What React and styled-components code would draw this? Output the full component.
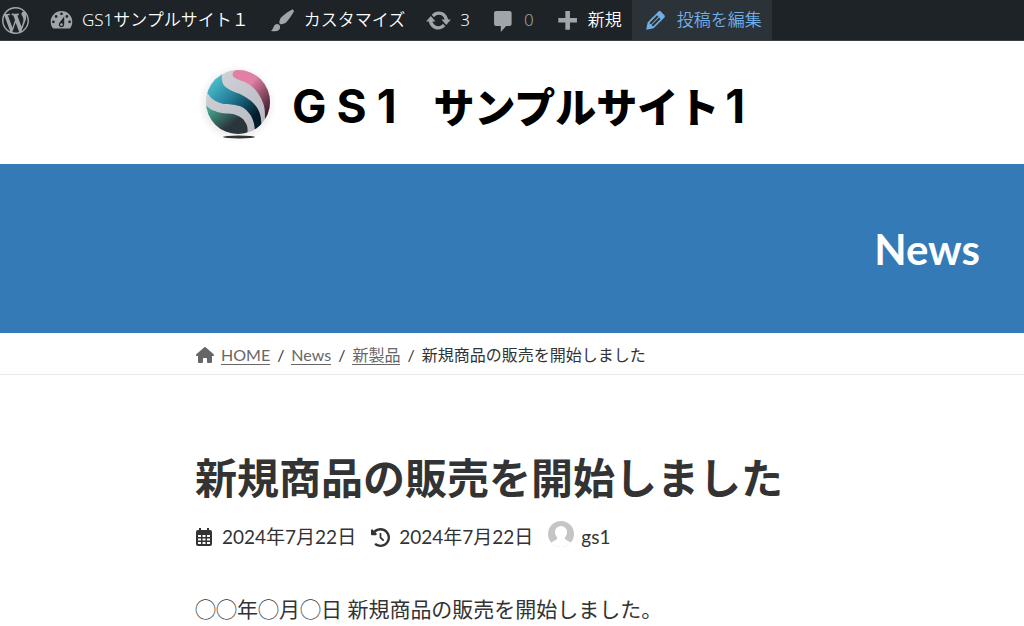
import React from "react";
import styled, { createGlobalStyle } from "styled-components";
import { FaHouse, FaClockRotateLeft } from "react-icons/fa6";

const GlobalStyle = createGlobalStyle`
  *, *::before, *::after { box-sizing: border-box; }
  body {
    margin: 0;
    background: #fff;
    color: #333;
    font-family: Lato, "Noto Sans CJK JP", sans-serif;
    font-size: 21px;
    line-height: 32px;
  }
  a { color: inherit; }
`;

const AdminBar = styled.nav`
  display: flex;
  height: 41px;
  background: #1d2327;
  border-bottom: 1px solid #3a3f43;
  color: #fff;
  font-family: "Noto Sans", "Noto Sans CJK JP", sans-serif;
  font-size: 17px;
  font-weight: 350;
  line-height: 40px;
  white-space: nowrap;
  overflow: hidden;
`;

const AdminItem = styled.a`
  display: flex;
  align-items: center;
  gap: ${(p) => p.$gap || 8}px;
  padding: 0 ${(p) => p.$end || 10}px 0 ${(p) => p.$start || 10}px;
  text-decoration: none;
  color: ${(p) => (p.$active ? "#72aee6" : p.$muted ? "#9ca1a6" : "inherit")};
  background: ${(p) => (p.$active ? "#2c3338" : "transparent")};
  svg {
    flex: none;
    fill: ${(p) => (p.$active ? "#72aee6" : "#a0a5aa")};
  }
`;

const DashIcon = ({ d, size = 27 }) => (
  <svg width={size} height={size} viewBox="0 0 20 20" aria-hidden="true">
    <path d={d} />
  </svg>
);

const icons = {
  wordpress:
    "M20 10c0-5.51-4.49-10-10-10C4.48 0 0 4.49 0 10c0 5.52 4.48 10 10 10 5.51 0 10-4.48 10-10zM7.78 15.37L4.37 6.22c.55-.02 1.17-.08 1.17-.08.5-.06.44-1.13-.06-1.11 0 0-1.45.11-2.37.11-.18 0-.37 0-.58-.01C4.12 2.69 6.87 1.11 10 1.11c2.33 0 4.45.87 6.05 2.34-.68-.11-1.65.39-1.65 1.58 0 .74.45 1.36.9 2.1.35.61.55 1.36.55 2.46 0 1.49-1.4 5-1.4 5l-3.03-8.37c.54-.02.82-.17.82-.17.5-.05.44-1.25-.06-1.22 0 0-1.44.12-2.38.12-.87 0-2.33-.12-2.33-.12-.5-.03-.56 1.2-.06 1.22l.92.08 1.26 3.41zM17.41 10c.24-.64.74-1.87.43-4.25.7 1.29 1.05 2.71 1.05 4.25 0 3.29-1.73 6.24-4.4 7.78.97-2.59 1.94-5.2 2.92-7.78zM6.1 18.09C3.12 16.65 1.11 13.53 1.11 10c0-1.3.23-2.48.72-3.59C3.25 10.3 4.67 14.2 6.1 18.09zm4.03-6.63l2.58 6.98c-.86.29-1.76.45-2.71.45-.79 0-1.57-.11-2.29-.33.81-2.38 1.62-4.74 2.42-7.1z",
  dashboard:
    "M3.76 16h12.48c1.1-1.37 1.76-3.11 1.76-5 0-4.42-3.58-8-8-8s-8 3.58-8 8c0 1.89.66 3.63 1.76 5zM10 4c.55 0 1 .45 1 1s-.45 1-1 1-1-.45-1-1 .45-1 1-1zM6 6c.55 0 1 .45 1 1s-.45 1-1 1-1-.45-1-1 .45-1 1-1zm8 0c.55 0 1 .45 1 1s-.45 1-1 1-1-.45-1-1 .45-1 1-1zm-5.37 5.55L12 7v6c0 1.1-.9 2-2 2s-2-.9-2-2c0-.57.24-1.08.63-1.45zM4 10c.55 0 1 .45 1 1s-.45 1-1 1-1-.45-1-1 .45-1 1-1zm12 0c.55 0 1 .45 1 1s-.45 1-1 1-1-.45-1-1 .45-1 1-1zm-5 3c0-.55-.45-1-1-1s-1 .45-1 1 .45 1 1 1 1-.45 1-1z",
  brush:
    "M18.33 3.57s.27-.8-.31-1.36c-.53-.52-1.22-.24-1.22-.24-.61.3-5.76 3.47-7.67 5.57-.86.96-2.06 3.79-1.09 4.82.92.98 3.96-.17 4.79-1 2.06-2.06 5.21-7.17 5.5-7.79zM1.4 17.65c2.37-1.56 1.46-3.41 3.23-4.64.93-.65 2.22-.62 3.08.29.63.67.8 2.57-.16 3.46-1.57 1.45-4 1.55-6.15.89z",
  update:
    "M10.2 3.28c3.53 0 6.43 2.61 6.92 6h2.08l-3.5 4-3.5-4h2.32c-.45-1.97-2.21-3.45-4.32-3.45-1.45 0-2.73.71-3.54 1.78L4.95 5.66C6.23 4.2 8.11 3.28 10.2 3.28zm-.4 13.44c-3.52 0-6.43-2.61-6.92-6H.8l3.5-4c1.17 1.33 2.33 2.67 3.5 4H5.48c.45 1.97 2.21 3.45 4.32 3.45 1.45 0 2.73-.71 3.54-1.78l1.71 1.95c-1.28 1.46-3.15 2.38-5.25 2.38z",
  comment:
    "M4.500 3h10c.800 0 1.500.700 1.500 1.500v8c0 .800-.700 1.500-1.500 1.500H12l-4 4.500V14H4.500c-.800 0-1.500-.700-1.500-1.500v-8C3 3.700 3.700 3 4.500 3z",
  plus: "M17 8.200v3.200h-5.200v5.400H8.400v-5.400H3.200V8.200h5.200V3h3.400v5.200z",
  pencil:
    "M13.89 3.39l2.71 2.72c.46.46.42 1.24.03 1.64l-8.01 8.02-5.56 1.16 1.16-5.58s7.6-7.63 7.99-8.03c.39-.39 1.22-.39 1.68.07zm-2.73 2.79l-5.59 5.61 1.11 1.11 5.54-5.65zm-2.97 8.23l5.58-5.6-1.07-1.08-5.59 5.6z",
};

const SiteHeader = styled.header`
  height: 123px;
  padding: 24px 44px 24px 196px;
`;

const Brand = styled.a`
  display: flex;
  align-items: center;
  width: max-content;
  height: 80px;
  color: #000;
  text-decoration: none;
  white-space: nowrap;
`;

const BrandName = styled.span`
  display: flex;
  align-items: baseline;
  margin-left: 12px;
  font-weight: 700;
  line-height: 64px;
`;

const BrandLatin = styled.span`
  display: flex;
  gap: 10px;
  font-family: Inter, sans-serif;
  font-size: 46px;
`;

const BrandKana = styled.span`
  margin: 0 6px 0 37px;
  font-family: "Noto Sans CJK JP", sans-serif;
  font-size: 41px;
  font-weight: 900;
`;

const Sphere = () => (
  <svg width="84" height="80" viewBox="0 0 84 80" aria-hidden="true">
    <defs>
      <clipPath id="ball"><circle cx="42" cy="37" r="32" /></clipPath>
      <radialGradient id="halo">
        <stop offset=".75" stopColor="#ececec" />
        <stop offset="1" stopColor="#fff" />
      </radialGradient>
      <linearGradient id="pink" x1="0" y1="0" x2="1" y2="1">
        <stop offset=".35" stopColor="#e27fa5" />
        <stop offset=".85" stopColor="#3b1a29" />
      </linearGradient>
      <linearGradient id="blue" x1="0" y1="0" x2="1" y2="1">
        <stop offset=".15" stopColor="#48bccb" />
        <stop offset=".45" stopColor="#237c96" />
        <stop offset=".8" stopColor="#021c2a" />
      </linearGradient>
      <linearGradient id="green" x1="0" y1="0" x2="1" y2="1">
        <stop offset=".15" stopColor="#46a68d" />
        <stop offset=".65" stopColor="#2b343b" />
      </linearGradient>
      <linearGradient id="silver" x1="0" y1="0" x2="1" y2="1">
        <stop offset="0" stopColor="#d5d5dc" />
        <stop offset="1" stopColor="#b4b4bc" />
      </linearGradient>
    </defs>
    <circle cx="41" cy="39" r="39" fill="url(#halo)" />
    <ellipse cx="43" cy="72" rx="16" ry="1.500" fill="#333" />
    <g clipPath="url(#ball)">
      <rect x="8" y="4" width="68" height="68" fill="url(#silver)" />
      <path d="M42 4C36 6 35 11 39 13C44 16 49 16 54 20C60 24 65 32 67 38C69 43 69 47 69 54L80 54L80 4Z" fill="url(#pink)" />
      <path d="M26 8C25 17 27 20 31 23C35 26 39 27 44 29C50 32 56 36 59 40C65 47 66 55 65 66L59 68C59 58 56 51 52 47C48 42 44 41 39 40C34 39 29 40 24 38C19 36 15 34 13 30L8 26L8 8Z" fill="url(#blue)" />
      <path d="M8 38C12 43 15 45 19 46C25 49 31 48 37 49C43 51 47 53 49 57C52 61 52 64 51 71L8 71Z" fill="url(#green)" />
    </g>
  </svg>
);

const Banner = styled.div`
  display: flex;
  align-items: center;
  justify-content: flex-end;
  height: 169px;
  padding: 0 44px;
  background: #337ab7;
  color: #fff;
  font-size: 42px;
  font-weight: 700;
`;

const Breadcrumb = styled.nav`
  height: 42px;
  padding: 0 44px 0 196px;
  border-bottom: 1px solid #e9e9e9;
  font-size: 16px;
  line-height: 24px;
  ol {
    display: flex;
    margin: 0;
    padding: 10px 0 0;
    list-style: none;
    white-space: nowrap;
  }
  li { display: flex; align-items: center; }
  li + li::before { content: "/"; margin: 0 7px; }
  svg { margin-right: 7px; color: #666; }
  a {
    line-height: 18px;
    color: #666;
    text-decoration: none;
    border-bottom: 1px solid #666;
  }
`;

const Article = styled.article`
  padding: 71px 44px 24px 195px;
  h1 {
    margin: 0;
    font-size: 42px;
    line-height: 64px;
    font-weight: 700;
  }
  p { margin: 40px 0 0; }
`;

const Meta = styled.div`
  display: flex;
  align-items: center;
  height: 32px;
  margin-top: 11px;
  gap: 15px;
  font-size: 19px;
  line-height: 28px;
  white-space: nowrap;
`;

const MetaItem = styled.span`
  display: flex;
  align-items: center;
  gap: ${(p) => p.$gap || 9}px;
`;

const CalendarIcon = () => (
  <svg width="18" height="20" viewBox="0 0 18 20" aria-hidden="true">
    <path
      fill="#333"
      fillRule="evenodd"
      d="M4 1h2v2h6V1h2v2h1a2 2 0 0 1 2 2v12a2 2 0 0 1-2 2H3a2 2 0 0 1-2-2V5a2 2 0 0 1 2-2h1zM3 8v2h3V8zM7.500 8v2h3V8zM12 8v2h3V8zM3 11.500v2h3v-2zM7.500 11.500v2h3v-2zM12 11.500v2h3v-2zM3 15v2h3v-2zM7.500 15v2h3v-2zM12 15v2h3v-2z"
    />
  </svg>
);

const Avatar = () => (
  <svg width="26" height="32" viewBox="0 0 26 32" aria-hidden="true">
    <defs><clipPath id="avatar"><circle cx="13" cy="13" r="13" /></clipPath></defs>
    <g clipPath="url(#avatar)">
      <rect width="26" height="26" fill="#c5c5c5" />
      <path d="M13 5a6 6 0 0 1 6 6c0 2-.7 4-2 5.200v2c2 1.200 4 2 6 3.500V27H3v-5.300c2-1.500 4-2.300 6-3.500v-2C7.700 15 7 13 7 11a6 6 0 0 1 6-6z" fill="#fff" />
    </g>
  </svg>
);

export default function App() {
  return (
    <>
      <GlobalStyle />
      <AdminBar>
        <AdminItem href="#" $start={2} $end={9} aria-label="WordPress"><DashIcon d={icons.wordpress} /></AdminItem>
        <AdminItem href="#" $gap={7}><DashIcon d={icons.dashboard} />GS1サンプルサイト１</AdminItem>
        <AdminItem href="#"><DashIcon d={icons.brush} />カスタマイズ</AdminItem>
        <AdminItem href="#"><DashIcon d={icons.update} />3</AdminItem>
        <AdminItem href="#" $muted $gap={7}><DashIcon d={icons.comment} />0</AdminItem>
        <AdminItem href="#" $gap={7}><DashIcon d={icons.plus} />新規</AdminItem>
        <AdminItem href="#" $active><DashIcon d={icons.pencil} />投稿を編集</AdminItem>
      </AdminBar>
      <SiteHeader>
        <Brand href="#">
          <Sphere />
          <BrandName>
            <BrandLatin><span>G</span><span>S</span><span>1</span></BrandLatin>
            <BrandKana>サンプルサイト</BrandKana>
            <BrandLatin>1</BrandLatin>
          </BrandName>
        </Brand>
      </SiteHeader>
      <Banner>News</Banner>
      <Breadcrumb aria-label="Breadcrumb">
        <ol>
          <li><FaHouse size={18} /><a href="#">HOME</a></li>
          <li><a href="#">News</a></li>
          <li><a href="#">新製品</a></li>
          <li>新規商品の販売を開始しました</li>
        </ol>
      </Breadcrumb>
      <Article>
        <h1>新規商品の販売を開始しました</h1>
        <Meta>
          <MetaItem><CalendarIcon />2024年7月22日</MetaItem>
          <MetaItem><FaClockRotateLeft size={19} />2024年7月22日</MetaItem>
          <MetaItem $gap={7}><Avatar />gs1</MetaItem>
        </Meta>
        <p>◯◯年◯月◯日 新規商品の販売を開始しました。</p>
      </Article>
    </>
  );
}
